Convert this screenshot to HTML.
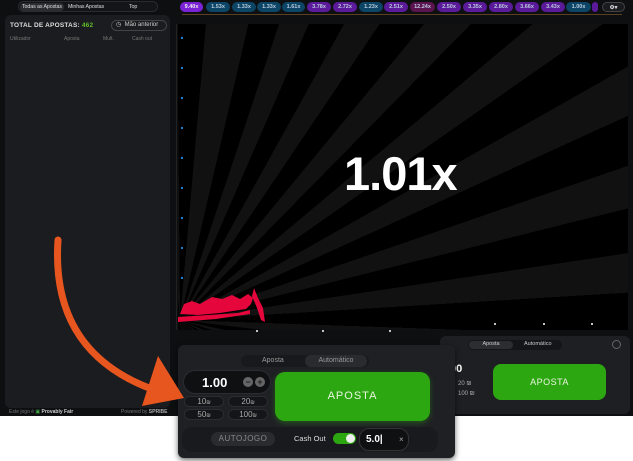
<!DOCTYPE html>
<html><head><meta charset="utf-8"><style>
*{box-sizing:border-box;margin:0;padding:0}
body{width:633px;height:461px;overflow:hidden;background:#fff;font-family:"Liberation Sans",sans-serif;position:relative}
.top{position:absolute;left:0;top:0;width:633px;height:416px;background:#0e0f11}
.abs{position:absolute}
.tabs{left:18px;top:1px;width:140px;height:11px;border-radius:6px;background:#141518;border:1px solid #2a2b2e;font-size:5.3px;color:#ddd;letter-spacing:-.1px}
.tabs span{position:absolute;top:1.5px;white-space:nowrap}
.lp{left:5px;top:15px;width:165px;height:393px;background:#1b1c1f;border-radius:6px}
.pill{position:absolute;top:2px;height:10px;border-radius:5px;font-size:5.5px;font-weight:bold;color:#bcd;text-align:center;line-height:10px}
.b{background:#0c4566}.p{background:#5a1a9a}.m{background:#5b1450}
.game{left:178px;top:24px;width:450px;height:306px;background:repeating-conic-gradient(from 8deg at 2px 296px,#111 0 5deg,#000 5deg 10.5deg)}
.rp{left:440px;top:336px;width:190px;height:78px;background:#1e1f22;border-radius:6px}
.ov{left:178px;top:345px;width:277px;height:113px;background:#1f2024;border-radius:6px;box-shadow:0 2px 6px rgba(0,0,0,.6)}
.sm{position:absolute;width:40px;height:11px;border-radius:6px;background:#141518;border:1px solid #2b2c30;color:#aaa;font-size:8px;text-align:center;line-height:10px}
.dot{position:absolute;width:2px;height:2px;background:#fff;border-radius:1px}
.bd{position:absolute;left:181px;width:2px;height:2px;background:#1a7fd0}
</style></head><body>
<div class="top"></div>
<div class="abs tabs"><span style="left:1px;top:0.5px;background:#2c2d31;border-radius:5px;padding:1px 2px">Todas as Apostas</span><span style="left:49px">Minhas Apostas</span><span style="left:110px">Top</span></div>
<div class="abs lp">
 <div class="abs" style="left:5px;top:7px;font-size:6.5px;color:#ddd;font-weight:bold;letter-spacing:.2px">TOTAL DE APOSTAS: <span style="color:#5fbf2a">462</span></div>
 <div class="abs" style="left:106px;top:5px;width:56px;height:11px;border-radius:6px;border:1px solid #444;font-size:6px;color:#ccc;line-height:9px;padding-left:4px">◷ &nbsp;Mão anterior</div>
 <div class="abs" style="left:5px;top:21px;font-size:5px;color:#777">Utilizador</div>
 <div class="abs" style="left:59px;top:21px;font-size:5px;color:#777">Aposta</div>
 <div class="abs" style="left:98px;top:21px;font-size:5px;color:#777">Mult.</div>
 <div class="abs" style="left:127px;top:21px;font-size:5px;color:#777">Cash out</div>
</div>
<div class="abs" style="left:9px;top:409px;font-size:5px;color:#777">Este jogo é <span style="color:#4a4">▣</span> <span style="color:#ccc;font-weight:bold">Provably Fair</span></div>
<div class="abs" style="left:121px;top:409px;font-size:5px;color:#777">Powered by <b style="color:#aaa">SPRIBE</b></div>

<div class="pill p" style="left:180px;width:23px;background:#7b22d6;color:#eee">9.40x</div>
<div class="pill b" style="left:206px;width:24px">1.53x</div>
<div class="pill b" style="left:232px;width:24px">1.33x</div>
<div class="pill b" style="left:257px;width:24px">1.33x</div>
<div class="pill b" style="left:282px;width:23px">1.61x</div>
<div class="pill p" style="left:307px;width:24px">3.78x</div>
<div class="pill p" style="left:333px;width:24px">2.72x</div>
<div class="pill b" style="left:359px;width:24px">1.23x</div>
<div class="pill p" style="left:384px;width:24px">2.51x</div>
<div class="pill m" style="left:410px;width:25px">12.24x</div>
<div class="pill p" style="left:437px;width:24px">2.50x</div>
<div class="pill p" style="left:463px;width:24px">3.35x</div>
<div class="pill p" style="left:489px;width:24px">2.80x</div>
<div class="pill p" style="left:515px;width:24px">3.66x</div>
<div class="pill p" style="left:541px;width:24px">3.43x</div>
<div class="pill b" style="left:566px;width:25px">1.00x</div>
<div class="pill p" style="left:592px;width:6px"></div>
<div class="pill" style="left:602px;width:23px;background:#1a1b1e;border:1px solid #444;color:#ddd">⚙▾</div>
<div class="abs" style="left:182px;top:14px;width:440px;height:1px;background:#5a4020"></div>

<div class="abs game"></div>
<div class="abs" style="left:176px;top:24px;width:1px;height:306px;background:#222"></div>
<div class="bd" style="top:37px"></div><div class="bd" style="top:67px"></div><div class="bd" style="top:97px"></div><div class="bd" style="top:127px"></div><div class="bd" style="top:157px"></div><div class="bd" style="top:187px"></div><div class="bd" style="top:217px"></div><div class="bd" style="top:247px"></div><div class="bd" style="top:277px"></div>
<div class="abs" style="left:344px;top:146px;font-size:47px;font-weight:bold;color:#fff;letter-spacing:-1px">1.01x</div>
<svg class="abs" style="left:176px;top:284px" width="90" height="46" viewBox="0 0 90 46">
<path d="M4 30 L8 20 L16 17 L24 20 L36 13 L46 15 L56 11 L64 15 L72 10 L77 14 L75 20 L70 25 L44 29 L22 31 Z" fill="#e5063c"/>
<path d="M2 33 L62 29 L74 26 L74 30 L40 35 L2 38Z" fill="#e5063c"/>
<path d="M78 4 L82 14 L87 24 L89 38 L85 36 L81 24 L76 12 Z" fill="#e5063c"/>
</svg>
<div class="dot" style="left:256px;top:330px"></div><div class="dot" style="left:322px;top:330px"></div><div class="dot" style="left:389px;top:330px"></div>
<div class="dot" style="left:494px;top:323px"></div><div class="dot" style="left:543px;top:323px"></div><div class="dot" style="left:591px;top:323px"></div>

<div class="abs rp">
 <div class="abs" style="left:28px;top:4px;width:94px;height:10px;border-radius:5px;background:#141518;font-size:5.5px;color:#ccc"><span class="abs" style="left:1px;top:1px;width:44px;height:8px;background:#2c2d31;border-radius:4px;text-align:center">Aposta</span><span class="abs" style="left:56px;top:1px">Automático</span></div>
 <div class="abs" style="left:172px;top:4px;width:9px;height:9px;border:1px solid #666;border-radius:50%"></div>
 <div class="abs" style="left:53px;top:28px;width:113px;height:36px;border-radius:8px;background:#2da711;color:#e8f5e0;font-size:9px;text-align:center;line-height:36px;letter-spacing:.5px">APOSTA</div>
 <div class="abs" style="left:10px;top:27px;font-size:11px;color:#fff;font-weight:bold">00</div>
 <div class="abs" style="left:18px;top:45px;font-size:6px;color:#aaa">20 ₪</div>
 <div class="abs" style="left:18px;top:55px;font-size:6px;color:#aaa">100 ₪</div>
</div>

<div class="abs ov">
 <div class="abs" style="left:63px;top:10px;width:128px;height:12px;border-radius:6px;background:#18191c;font-size:7px;color:#999"><span class="abs" style="left:21px;top:2px">Aposta</span><span class="abs" style="left:64px;top:0;width:62px;height:12px;border-radius:6px;background:#2a2b2f;line-height:12px;text-align:center">Automático</span></div>
 <div class="abs" style="left:5px;top:25px;width:88px;height:24px;border-radius:12px;background:#0f1012;border:1px solid #2b2c30"><span class="abs" style="left:18px;top:4px;font-size:13px;font-weight:bold;color:#fff">1.00</span><span class="abs" style="left:59px;top:6px;width:10px;height:10px;border-radius:50%;background:#666;color:#222;font-size:9px;line-height:10px;text-align:center;font-weight:bold">−</span><span class="abs" style="left:71px;top:6px;width:10px;height:10px;border-radius:50%;background:#666;color:#222;font-size:9px;line-height:10px;text-align:center;font-weight:bold">+</span></div>
 <div class="sm" style="left:6px;top:51px">10<small style="font-size:5px">₪</small></div>
 <div class="sm" style="left:50px;top:51px">20<small style="font-size:5px">₪</small></div>
 <div class="sm" style="left:6px;top:64px">50<small style="font-size:5px">₪</small></div>
 <div class="sm" style="left:50px;top:64px">100<small style="font-size:5px">₪</small></div>
 <div class="abs" style="left:97px;top:27px;width:155px;height:49px;border-radius:10px;background:#2da711;box-shadow:0 2px 6px rgba(45,167,17,.4);color:#e8f5e0;font-size:11px;text-align:center;line-height:49px;letter-spacing:1px">APOSTA</div>
 <div class="abs" style="left:4px;top:82px;width:256px;height:25px;border-radius:10px;background:#191a1d"></div>
 <div class="abs" style="left:33px;top:87px;width:64px;height:14px;border-radius:7px;background:#2a2b2e;color:#888;font-size:8px;text-align:center;line-height:14px;letter-spacing:.5px">AUTOJOGO</div>
 <div class="abs" style="left:116px;top:89px;font-size:7.5px;color:#ddd">Cash Out</div>
 <div class="abs" style="left:155px;top:88px;width:23px;height:11px;border-radius:6px;background:#2da711"><span class="abs" style="left:13px;top:1px;width:9px;height:9px;border-radius:50%;background:#eee"></span></div>
 <div class="abs" style="left:181px;top:83px;width:50px;height:23px;border-radius:10px;background:#0f1012;border:1px solid #333"><span class="abs" style="left:6px;top:5px;font-size:10px;color:#fff;font-weight:bold">5.0|</span><span class="abs" style="left:39px;top:6px;font-size:8px;color:#aaa">×</span></div>
</div>

<svg class="abs" style="left:0;top:0" width="633" height="461">
<path d="M58 240 C52 330 100 372 160 392" fill="none" stroke="#e8561f" stroke-width="7" stroke-linecap="round"/>
<path d="M158 356 L184 398 L142 406 Z" fill="#e8561f"/>
</svg>
</body></html>
